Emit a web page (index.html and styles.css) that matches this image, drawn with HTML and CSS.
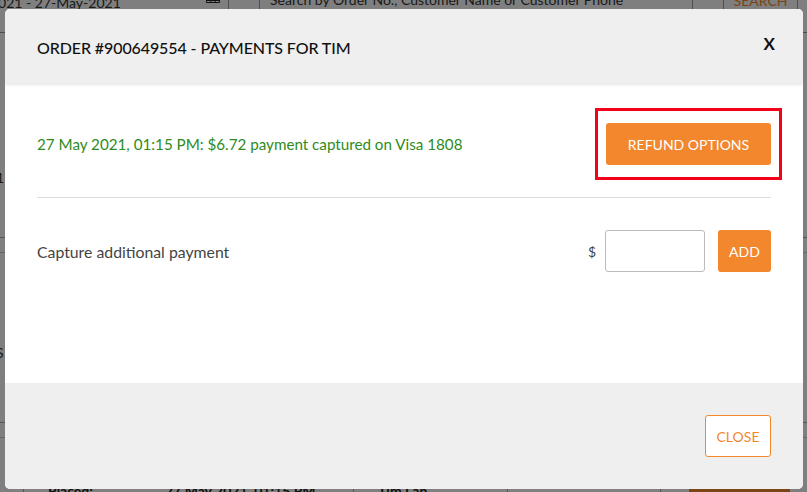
FILE: index.html
```html
<!DOCTYPE html>
<html lang="en">

<head>
    <meta charset="UTF-8">
    <meta name="viewport" content="width=device-width, initial-scale=1.0">
    <title>Order payments</title>
    <link rel="stylesheet" href="styles.css">
</head>

<body>
    <!-- Page behind the dialog -->
    <div class="page">
        <div class="filter-bar">
            <div class="date-range">
                <span>2021 - 27-May-2021</span>
                <svg class="calendar" width="14" height="14" viewBox="0 0 14 14" fill="none" stroke="#222" stroke-width="1">
                    <path d="M.5 .5h13v6H.5zM.5 2.5h13M.5 4.5h13M4.8 0v7M9.2 0v7"></path>
                </svg>
            </div>
            <div class="filter-gap"></div>
            <div class="search-text">Search by Order No., Customer Name or Customer Phone</div>
            <div class="search-button">SEARCH</div>
        </div>

        <div class="section section-first"><span class="edge-text">1</span></div>
        <div class="row-stub"></div>
        <div class="section section-second"><span class="edge-text">S</span></div>
        <div class="row-stub"></div>

        <div class="order-row">
            <div class="order-cell order-info">
                <span class="order-label">Placed:</span>
                <span>27 May 2021, 01:15 PM</span>
            </div>
            <div class="order-cell order-name">Tim Lan</div>
            <div class="order-cell order-blank"></div>
            <div class="order-cell order-last">
                <div class="order-action"></div>
            </div>
        </div>
    </div>

    <div class="backdrop"></div>

    <div class="modal">
        <div class="modal-header">
            <h1>ORDER #900649554 - PAYMENTS FOR TIM</h1>
            <span class="modal-x">X</span>
        </div>

        <div class="modal-body">
            <div class="payment-row">
                <div class="payment-text">27 May 2021, 01:15 PM: $6.72 payment captured on Visa 1808</div>
                <div class="highlight-box">
                    <button class="btn btn-refund">REFUND OPTIONS</button>
                </div>
            </div>

            <div class="capture-row">
                <div class="capture-label">Capture additional payment</div>
                <span class="dollar">$</span>
                <input class="amount" type="text">
                <button class="btn btn-add">ADD</button>
            </div>
        </div>

        <div class="modal-footer">
            <button class="btn btn-close">CLOSE</button>
        </div>
    </div>
</body>

</html>
```

FILE: styles.css
```css
html,
body {
    margin: 0;
    padding: 0;
    height: 492px;
    overflow: hidden;
}

body {
    font-family: Lato, "Open Sans", sans-serif;
    color: #333;
    background-color: #fff;
}

.page {
    height: 492px;
    overflow: hidden;
}

/* Behind the dialog */
.filter-bar {
    display: flex;
    height: 33px;
    box-sizing: border-box;
    border-bottom: 1px solid #999;
    font-size: 14px;
    line-height: 14px;
}

.date-range {
    width: 238px;
    flex-shrink: 0;
    margin-left: -10px;
    margin-top: -4px;
    padding-right: 8px;
    display: flex;
    justify-content: space-between;
    box-sizing: border-box;
}

.calendar {
    margin-top: 0;
}

.filter-gap {
    width: 32px;
    flex-shrink: 0;
    box-sizing: border-box;
    border-left: 1px solid #999;
    border-right: 1px solid #999;
}

.search-text {
    width: 433px;
    flex-shrink: 0;
    box-sizing: border-box;
    padding-left: 10px;
    margin-top: -7px;
    padding-top: 0;
    border-right: 1px solid #999;
    white-space: nowrap;
}

.search-button {
    width: 75px;
    flex-shrink: 0;
    box-sizing: border-box;
    margin-left: 30px;
    margin-top: -6px;
    text-align: center;
    color: #f58a2c;
    border-left: 1px solid #f58a2c;
    border-right: 1px solid #f58a2c;
}

.section {
    font-size: 14px;
    line-height: 14px;
    box-sizing: border-box;
}

.section-first {
    height: 204px;
    padding-top: 138px;
}

.section-second {
    height: 169px;
    padding-top: 93px;
}

.edge-text {
    display: block;
    margin-left: -4px;
}

.row-stub {
    height: 16px;
    box-sizing: border-box;
    border-top: 1px solid #aaa;
    border-bottom: 1px solid #ccc;
}

.order-row {
    display: flex;
    height: 54px;
    margin-left: 23px;
    font-size: 14px;
    line-height: 14px;
    font-weight: bold;
    color: #222;
}

.order-cell {
    box-sizing: border-box;
    border-left: 1px solid #aaa;
    padding-top: 46px;
    white-space: nowrap;
}

.order-info {
    width: 330px;
    display: flex;
    padding-left: 24px;
}

.order-label {
    width: 117px;
}

.order-name {
    width: 154px;
    padding-left: 24px;
}

.order-blank {
    width: 153px;
}

.order-last {
    flex: 1;
    padding: 0;
}

.order-action {
    width: 101px;
    height: 30px;
    margin-top: 24px;
    margin-left: 28px;
    background-color: #f58a2c;
}

/* Dialog */
.backdrop {
    position: absolute;
    top: 0;
    left: 0;
    width: 100%;
    height: 100%;
    background-color: rgba(0, 0, 0, 0.5);
}

.modal {
    position: absolute;
    top: 9px;
    left: 5px;
    width: 798px;
    height: 480px;
    display: flex;
    flex-direction: column;
    background-color: #fff;
    border-radius: 5px;
    overflow: hidden;
}

.modal-header {
    height: 74px;
    flex-shrink: 0;
    display: flex;
    justify-content: space-between;
    box-sizing: border-box;
    padding: 29px 28px 0 32px;
    background-color: #efefef;
    box-shadow: 0 1px 4px rgba(0, 0, 0, 0.15);
    color: #111;
}

.modal-header h1 {
    margin: 0;
    font-size: 16px;
    line-height: 20px;
    font-weight: 500;
    letter-spacing: -0.1px;
}

.modal-x {
    font-size: 17px;
    line-height: 12px;
    font-weight: bold;
}

.modal-body {
    flex: 1;
    padding: 25px 32px 0;
}

.payment-row {
    display: flex;
    justify-content: space-between;
    align-items: center;
    margin-right: -11px;
    padding-bottom: 18px;
    position: relative;
}

.payment-row::after {
    content: "";
    position: absolute;
    left: 0;
    right: 11px;
    bottom: 0;
    border-bottom: 1px solid #ddd;
}

.payment-text {
    font-size: 15.2px;
    color: #2d8c1c;
}

.highlight-box {
    border: 3px solid #f5001a;
    padding: 12px 8px;
}

.btn {
    font-family: Lato, "Open Sans", sans-serif;
    font-size: 14px;
    border-radius: 3px;
    cursor: pointer;
    height: 42px;
    display: block;
    padding: 0;
}

.btn-refund {
    width: 165px;
    border: none;
    background-color: #f2872e;
    color: white;
}

.capture-row {
    display: flex;
    align-items: center;
    margin-top: 32px;
}

.capture-label {
    flex: 1;
    font-size: 15.8px;
    color: #444;
}

.dollar {
    font-size: 14px;
    margin-right: 9px;
    color: #444;
}

.amount {
    width: 100px;
    height: 42px;
    box-sizing: border-box;
    border: 1px solid #bbb;
    border-radius: 3px;
    padding: 0 8px;
    margin: 0 13px 0 0;
}

.btn-add {
    width: 53px;
    border: none;
    background-color: #f2872e;
    color: white;
}

.modal-footer {
    height: 106px;
    flex-shrink: 0;
    box-sizing: border-box;
    padding: 32px 32px 0 0;
    display: flex;
    justify-content: flex-end;
    background-color: #efefef;
}

.btn-close {
    width: 66px;
    border: 1px solid #f2872e;
    background-color: #fff;
    color: #f2872e;
}
```
